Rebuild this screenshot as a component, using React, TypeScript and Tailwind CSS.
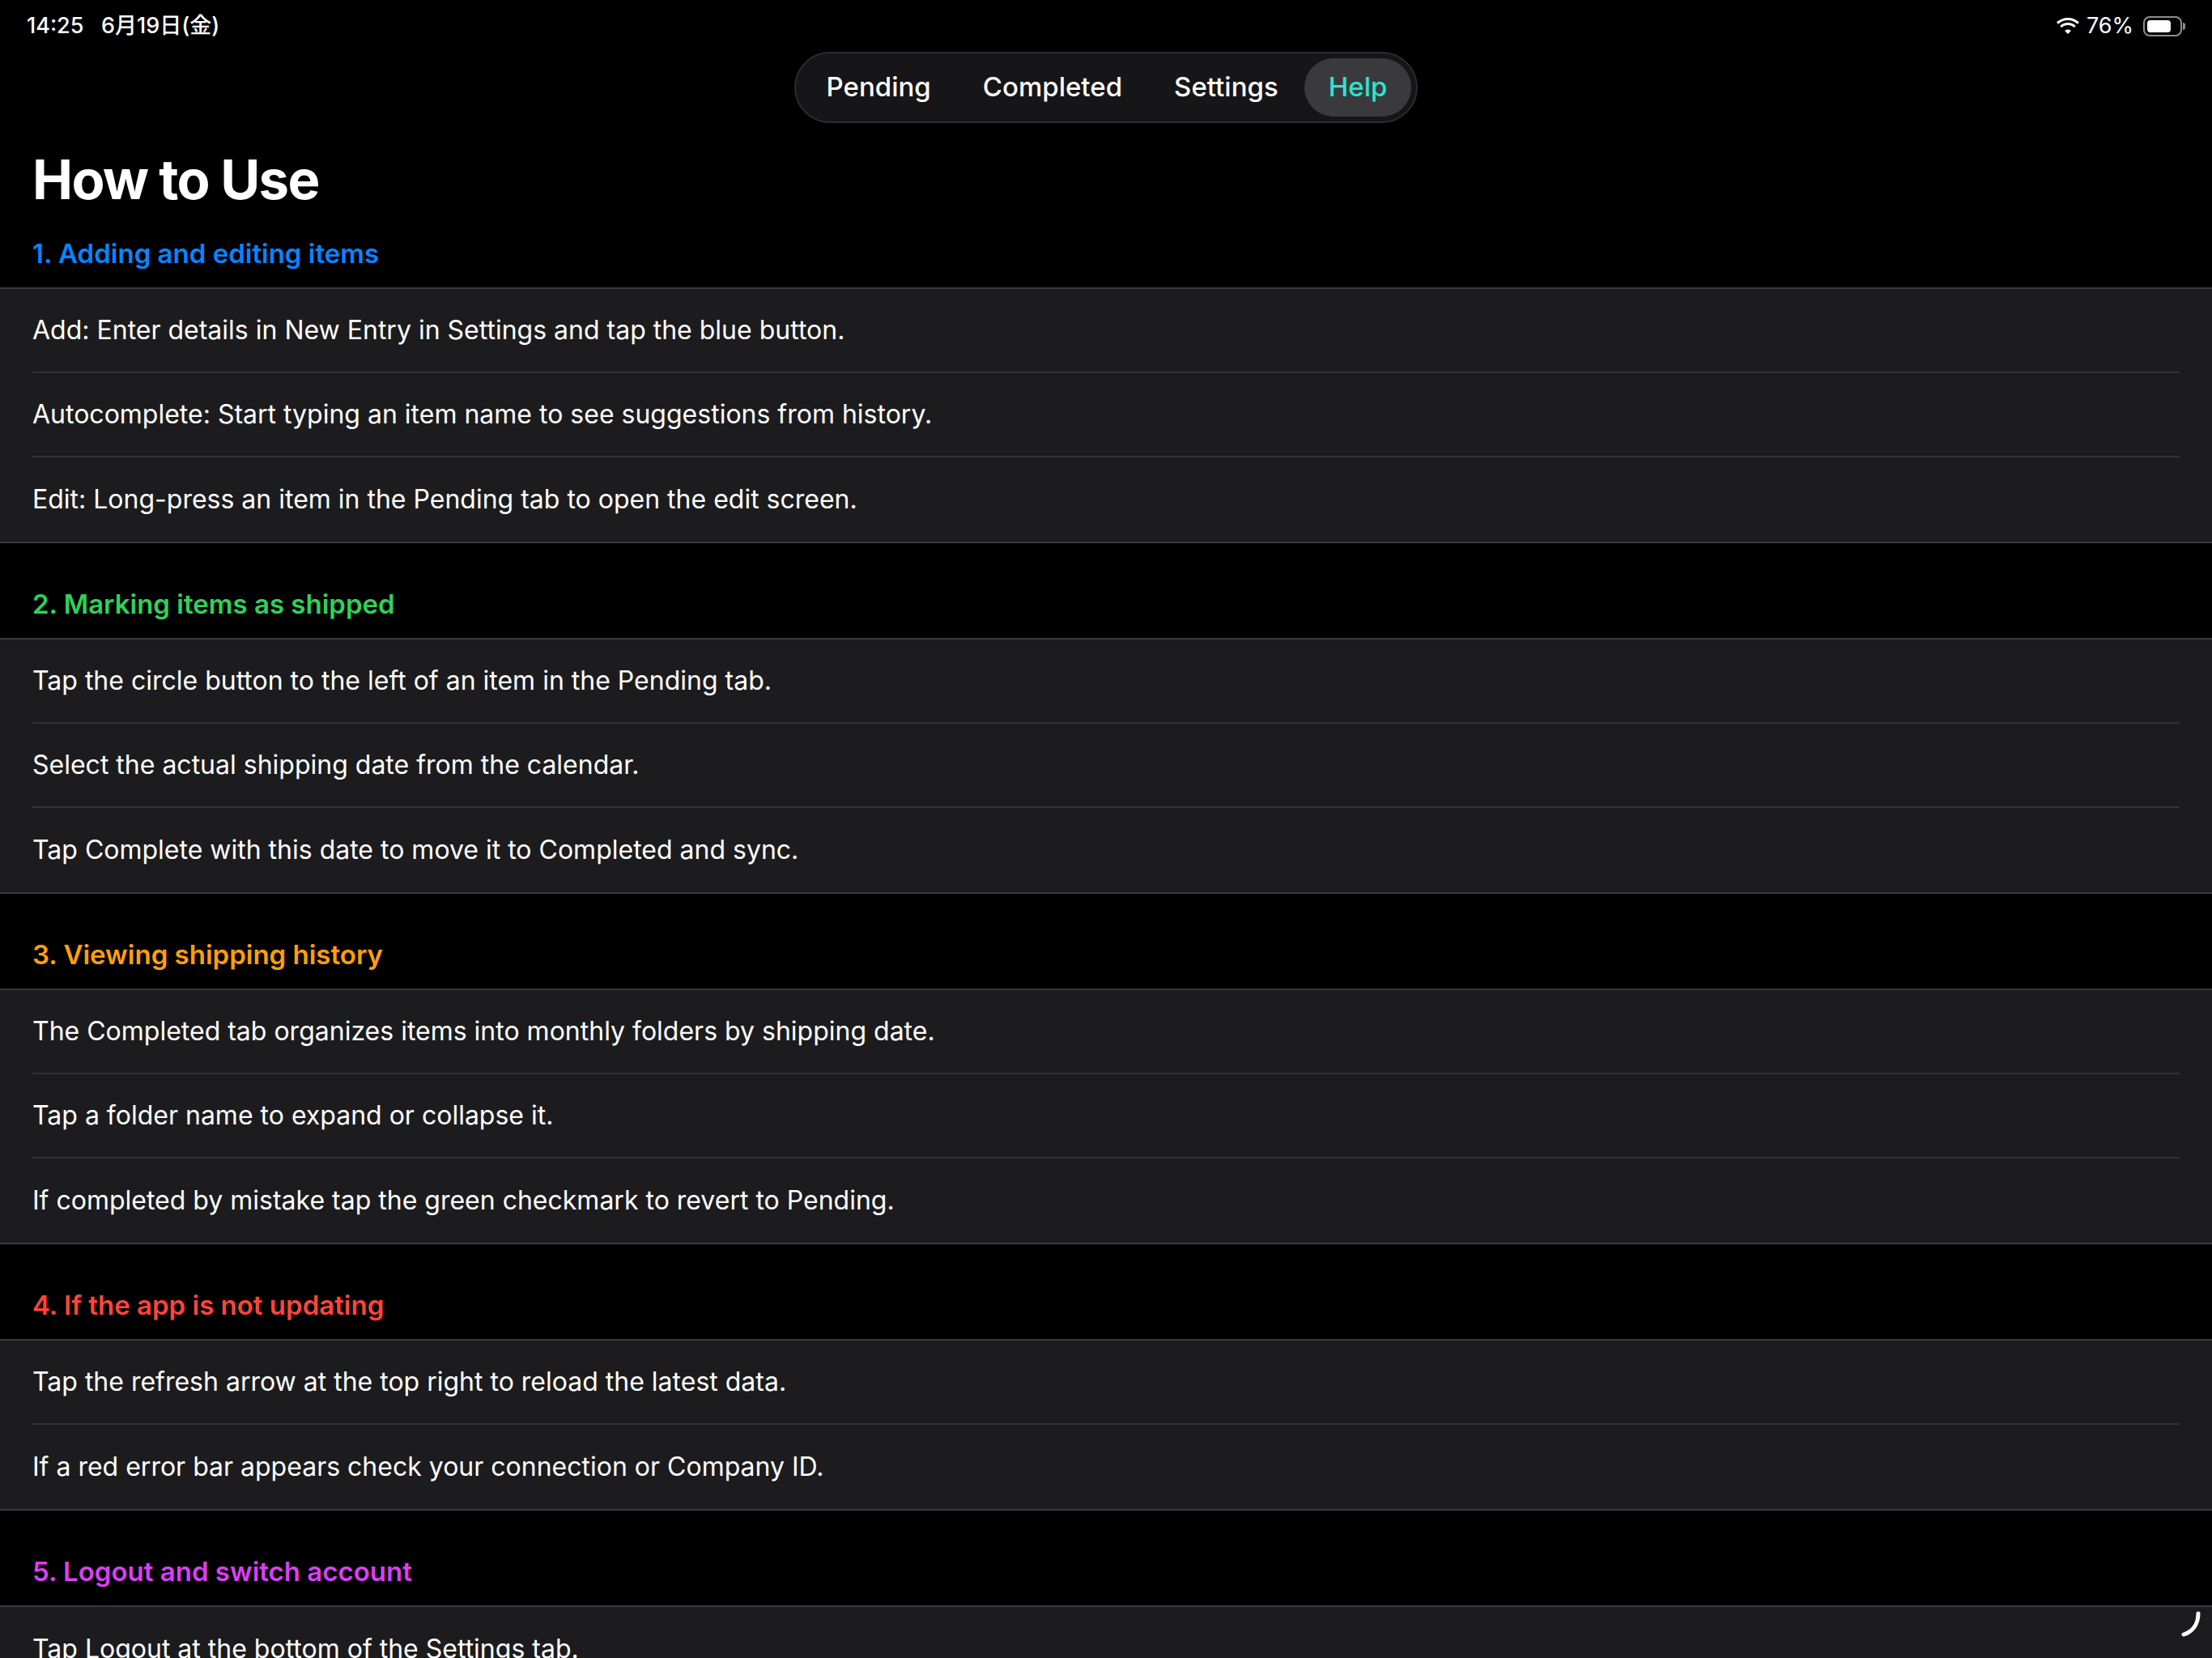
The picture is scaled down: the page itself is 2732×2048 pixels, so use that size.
const sections = [
  {
    title: '1. Adding and editing items',
    color: 'text-[#0a84ff]',
    rows: [
      'Add: Enter details in New Entry in Settings and tap the blue button.',
      'Autocomplete: Start typing an item name to see suggestions from history.',
      'Edit: Long-press an item in the Pending tab to open the edit screen.',
    ],
  },
  {
    title: '2. Marking items as shipped',
    color: 'text-[#30d158]',
    rows: [
      'Tap the circle button to the left of an item in the Pending tab.',
      'Select the actual shipping date from the calendar.',
      'Tap Complete with this date to move it to Completed and sync.',
    ],
  },
  {
    title: '3. Viewing shipping history',
    color: 'text-[#ff9f0a]',
    rows: [
      'The Completed tab organizes items into monthly folders by shipping date.',
      'Tap a folder name to expand or collapse it.',
      'If completed by mistake tap the green checkmark to revert to Pending.',
    ],
  },
  {
    title: '4. If the app is not updating',
    color: 'text-[#ff453a]',
    rows: [
      'Tap the refresh arrow at the top right to reload the latest data.',
      'If a red error bar appears check your connection or Company ID.',
    ],
  },
  {
    title: '5. Logout and switch account',
    color: 'text-[#da3ff2]',
    rows: ['Tap Logout at the bottom of the Settings tab.'],
  },
];

const tabs = ['Pending', 'Completed', 'Settings', 'Help'];

export default function App() {
  return (
    <div
      className="relative w-[2732px] h-[2048px] overflow-hidden bg-black text-white"
      style={{ fontFamily: 'Inter, "Noto Sans CJK JP", sans-serif' }}
    >
      {/* status bar */}
      <div className="flex items-center justify-between h-[62px] px-[33px] pt-[2px]">
        <span className="text-[27px] font-medium">14:25&nbsp;&nbsp;&nbsp;6月19日(金)</span>
        <div className="flex items-center gap-[8px]">
          <svg width="30" height="22" viewBox="0 0 30 22" fill="white">
            <path d="M15 4c4.6 0 8.8 1.8 11.9 4.7l2.1-2.2C25.3 3 20.4 1 15 1S4.7 3 1 6.5l2.1 2.2C6.2 5.8 10.4 4 15 4z" />
            <path d="M15 10c3 0 5.7 1.2 7.7 3.1l2.1-2.2C22.3 8.5 18.8 7 15 7s-7.3 1.5-9.8 3.9l2.1 2.2C9.3 11.2 12 10 15 10z" />
            <path d="M15 15.5c1.5 0 2.9.6 3.9 1.6L15 21l-3.9-3.9c1-1 2.4-1.6 3.9-1.6z" />
          </svg>
          <span className="text-[27px]">76%</span>
          <div className="flex items-center ml-[4px]">
            <div className="w-[48px] h-[25px] rounded-[8px] border-2 border-[#8e8e93] p-[3px]">
              <div className="w-[76%] h-full rounded-[4px] bg-white" />
            </div>
            <div className="w-[3px] h-[9px] rounded-r-sm bg-[#8e8e93] ml-[1px]" />
          </div>
        </div>
      </div>

      {/* segmented tabs */}
      <div className="flex justify-center mt-[2px]">
        <div className="flex items-center h-[88px] px-[6px] rounded-full bg-[#161618] border-2 border-[#2c2c2e]">
          {tabs.map((t) => (
            <div
              key={t}
              className={
                t === 'Help'
                  ? 'h-[72px] px-[30px] flex items-center rounded-full bg-[#3a3a3c] text-[#2fe3d3] text-[33px] font-medium'
                  : 'h-[72px] px-[32px] flex items-center text-[33px] font-medium text-white'
              }
            >
              {t}
            </div>
          ))}
        </div>
      </div>

      <h1 className="px-[40px] mt-[28px] text-[67px] font-bold leading-[84px] tracking-tight">How to Use</h1>

      {sections.map((s, i) => (
        <div key={s.title}>
          <div className={`px-[40px] ${i === 0 ? 'pt-[28px]' : 'pt-[54px]'} pb-[21px] text-[33px] leading-[42px] font-semibold ${s.color}`}>
            {s.title}
          </div>
          <div className="bg-[#1c1c1e] border-y-2 border-[#3a3a3c]">
            {s.rows.map((r, j) => (
              <div key={r} className="pl-[40px] pr-[40px]">
                <div
                  className={`h-[104px] flex items-center text-[32px] text-white ${
                    j < s.rows.length - 1 ? 'border-b-2 border-[#333336]' : ''
                  }`}
                >
                  {r}
                </div>
              </div>
            ))}
          </div>
        </div>
      ))}

      <svg className="absolute right-[14px] bottom-[26px]" width="24" height="32" viewBox="0 0 24 32" fill="none">
        <path d="M21 3c0 12-6 22-18 26" stroke="white" strokeWidth="5" strokeLinecap="round" />
      </svg>
    </div>
  );
}
